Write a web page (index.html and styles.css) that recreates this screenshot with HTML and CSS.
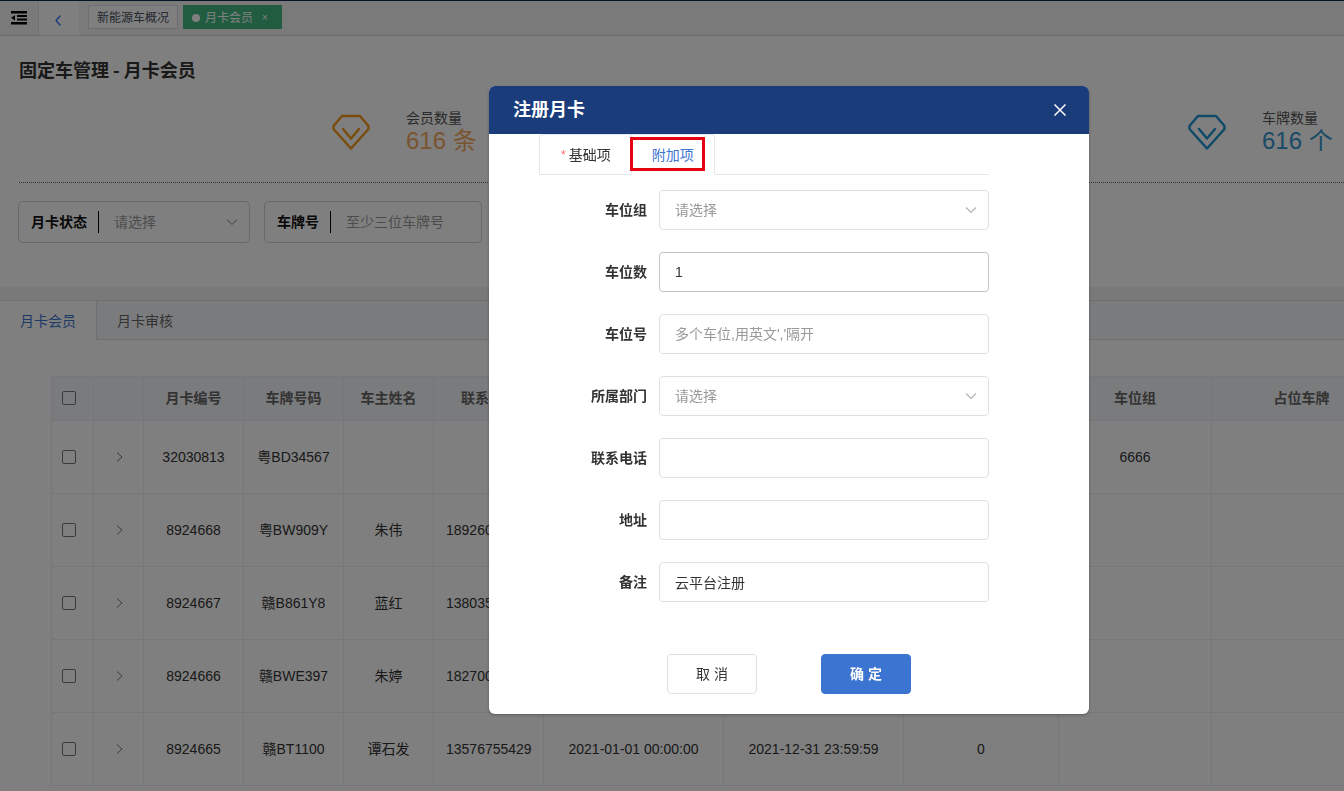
FILE: index.html
```html
<!DOCTYPE html>
<html lang="zh-CN">
<head>
<meta charset="utf-8">
<title>月卡会员</title>
<link rel="stylesheet" href="styles.css">
</head>
<body>
<div class="page">
  <header class="topbar">
    <button class="fold" type="button" aria-label="收起菜单">
      <svg width="16" height="14" viewBox="0 0 16 14"><path d="M0 0h16v2.500H0zM6 4h10v2H6zM6 7.500h10v2H6zM0 11h16v2.500H0zM0 6.800l4-2.600v5.200z" fill="#000"/></svg>
    </button>
    <button class="back" type="button" aria-label="返回">
      <svg width="6" height="11" viewBox="0 0 6 11"><path d="M5.500.5L1 5.500l4.500 5" fill="none" stroke="#2f6bff" stroke-width="1.300"/></svg>
    </button>
    <nav class="tags">
      <a class="tag" href="#">新能源车概况</a>
      <a class="tag tag-active" href="#"><span class="dot"></span>月卡会员<span class="tag-close">×</span></a>
    </nav>
  </header>
  <section class="summary">
    <h1 class="title">固定车管理 - 月卡会员</h1>
    <div class="stats">
      <div class="stat orange">
        <svg class="gem" width="40" height="38" viewBox="0 0 40 38" fill="none" stroke="currentColor" stroke-width="2.500" stroke-linejoin="round" stroke-linecap="round"><path d="M11 3h18l8.500 10v3L20 35.500 2.500 16v-3z"/><path d="M12 16l8 9.500 8-9.500"/></svg>
        <div class="stat-text"><span class="stat-label">会员数量</span><span class="stat-value">616 条</span></div>
      </div>
      <div class="stat blue">
        <svg class="gem" width="40" height="38" viewBox="0 0 40 38" fill="none" stroke="currentColor" stroke-width="2.500" stroke-linejoin="round" stroke-linecap="round"><path d="M11 3h18l8.500 10v3L20 35.500 2.500 16v-3z"/><path d="M12 16l8 9.500 8-9.500"/></svg>
        <div class="stat-text"><span class="stat-label">车牌数量</span><span class="stat-value">616 个</span></div>
      </div>
    </div>
    <div class="filters">
      <div class="filter filter-state">
        <label for="state">月卡状态</label>
        <select id="state" class="filter-input select"><option>请选择</option></select>
      </div>
      <div class="filter filter-plate">
        <label for="plate">车牌号</label>
        <input id="plate" class="filter-input" type="text" placeholder="至少三位车牌号">
      </div>
    </div>
  </section>
  <section class="list">
    <nav class="list-tabs">
      <a class="list-tab list-tab-active" href="#">月卡会员</a>
      <a class="list-tab" href="#">月卡审核</a>
    </nav>
    <div class="table-wrap">
      <table class="table">
        <colgroup><col class="w-check"><col class="w-expand"><col class="w-100"><col class="w-100"><col class="w-90"><col class="w-110"><col class="w-180"><col class="w-180"><col class="w-155"><col class="w-153"><col class="w-180"></colgroup>
        <thead>
          <tr><th class="check"><input type="checkbox" aria-label="全选"></th><th></th><th>月卡编号</th><th>车牌号码</th><th>车主姓名</th><th class="phone-head">联系</th><th></th><th></th><th></th><th>车位组</th><th>占位车牌</th></tr>
        </thead>
        <tbody>
          <tr><td class="check"><input type="checkbox" aria-label="32030813"></td><td><button class="expand" type="button" aria-label="展开"><svg width="7" height="10" viewBox="0 0 7 10"><path d="M1 .5L6 5 1 9.500" fill="none" stroke="currentColor"/></svg></button></td><td>32030813</td><td>粤BD34567</td><td></td><td></td><td></td><td></td><td></td><td>6666</td><td></td></tr>
          <tr><td class="check"><input type="checkbox" aria-label="8924668"></td><td><button class="expand" type="button" aria-label="展开"><svg width="7" height="10" viewBox="0 0 7 10"><path d="M1 .5L6 5 1 9.500" fill="none" stroke="currentColor"/></svg></button></td><td>8924668</td><td>粤BW909Y</td><td>朱伟</td><td class="phone">189260</td><td></td><td></td><td></td><td></td><td></td></tr>
          <tr><td class="check"><input type="checkbox" aria-label="8924667"></td><td><button class="expand" type="button" aria-label="展开"><svg width="7" height="10" viewBox="0 0 7 10"><path d="M1 .5L6 5 1 9.500" fill="none" stroke="currentColor"/></svg></button></td><td>8924667</td><td>赣B861Y8</td><td>蓝红</td><td class="phone">138035</td><td></td><td></td><td></td><td></td><td></td></tr>
          <tr><td class="check"><input type="checkbox" aria-label="8924666"></td><td><button class="expand" type="button" aria-label="展开"><svg width="7" height="10" viewBox="0 0 7 10"><path d="M1 .5L6 5 1 9.500" fill="none" stroke="currentColor"/></svg></button></td><td>8924666</td><td>赣BWE397</td><td>朱婷</td><td class="phone">182700</td><td></td><td></td><td></td><td></td><td></td></tr>
          <tr><td class="check"><input type="checkbox" aria-label="8924665"></td><td><button class="expand" type="button" aria-label="展开"><svg width="7" height="10" viewBox="0 0 7 10"><path d="M1 .5L6 5 1 9.500" fill="none" stroke="currentColor"/></svg></button></td><td>8924665</td><td>赣BT1100</td><td>谭石发</td><td class="phone">13576755429</td><td>2021-01-01 00:00:00</td><td>2021-12-31 23:59:59</td><td>0</td><td></td><td></td></tr>
        </tbody>
      </table>
    </div>
  </section>
</div>
<div class="overlay">
  <form class="dialog" role="dialog" aria-labelledby="dialog-title">
    <header class="dialog-head">
      <h2 id="dialog-title">注册月卡</h2>
      <button class="close" type="button" aria-label="关闭"><svg width="12" height="12" viewBox="0 0 12 12"><path d="M.5.5l11 11M11.500.5l-11 11" stroke="#fff" stroke-width="1.500"/></svg></button>
    </header>
    <div class="dialog-body">
      <nav class="tabs">
        <a class="tab" href="#"><span class="star">*</span>基础项</a>
        <a class="tab tab-on" href="#">附加项</a>
      </nav>
      <div class="fields">
        <div class="field"><label for="f1">车位组</label><select id="f1" class="input select"><option>请选择</option></select></div>
        <div class="field"><label for="f2">车位数</label><input id="f2" class="input hover" type="text" value="1"></div>
        <div class="field"><label for="f3">车位号</label><input id="f3" class="input" type="text" placeholder="多个车位,用英文','隔开"></div>
        <div class="field"><label for="f4">所属部门</label><select id="f4" class="input select"><option>请选择</option></select></div>
        <div class="field"><label for="f5">联系电话</label><input id="f5" class="input" type="text"></div>
        <div class="field"><label for="f6">地址</label><input id="f6" class="input" type="text"></div>
        <div class="field"><label for="f7">备注</label><input id="f7" class="input" type="text" value="云平台注册"></div>
      </div>
    </div>
    <footer class="actions">
      <button class="btn" type="button">取 消</button>
      <button class="btn btn-primary" type="button">确 定</button>
    </footer>
  </form>
</div>
</body>
</html>
```

FILE: styles.css
```css
* { box-sizing: border-box; }
body {
  margin: 0;
  height: 100vh;
  overflow: hidden;
  background: #fff;
  color: #333;
  font: 14px/20px "Liberation Sans", "Noto Sans CJK SC", sans-serif;
}
a { color: inherit; text-decoration: none; }
button, input, select { font: inherit; color: inherit; }
button { padding: 0; border: 0; background: none; }
h1, h2 { margin: 0; }

.topbar {
  display: flex;
  align-items: stretch;
  height: 36px;
  border-top: 1px solid #0c2450;
  border-bottom: 1px solid #d8dce5;
  background: #f5f5f5;
}
.fold { width: 38px; display: flex; align-items: center; justify-content: center; }
.back { width: 41px; padding: 5px 2px 0 0; background: #fff; border-left: 1px solid #e4e4e4; }
.tags { display: flex; align-items: flex-start; gap: 5px; padding: 4px 0 0 9px; }
.tag {
  display: flex;
  align-items: center;
  height: 24px;
  padding: 2px 8px 0;
  border: 1px solid #d8dce5;
  background: #fff;
  color: #495060;
  font-size: 12px;
}
.tag-active { border-color: #42b983; background: #42b983; color: #fff; }
.dot { width: 8px; height: 8px; margin-right: 5px; border-radius: 50%; background: #fff; }
.tag-close { width: 16px; margin-left: 4px; font-size: 10px; text-align: center; }

.summary { height: 251px; padding: 21px 0 0 18px; }
.title { padding-left: 1px; font-family: "Noto Sans CJK SC", sans-serif; font-size: 18px; line-height: 24px; }
.stats {
  display: grid;
  grid-template-columns: 856px 1fr;
  height: 102px;
  margin-left: 1px;
  padding: 26px 0 0 312px;
  border-bottom: 1px dotted #666;
}
.stat { display: flex; gap: 35px; }
.gem { margin-top: 6px; }
.orange { color: #f59a1e; }
.blue { color: #1e96d2; }
.stat-text { display: flex; flex-direction: column; white-space: nowrap; }
.stat-label { color: #555; line-height: 22px; }
.stat-value { font-size: 24px; line-height: 24px; }
.orange .stat-value { color: #f5a85f; }
.blue .stat-value { color: #3294cd; }
.filters { display: flex; gap: 14px; margin-top: 18px; }
.filter {
  display: flex;
  align-items: center;
  height: 42px;
  padding-left: 12px;
  border: 1px solid #d0d0d0;
  border-radius: 5px;
}
.filter label { padding-right: 11px; border-right: 1px solid #000; color: #111; font-weight: 700; line-height: 22px; }
.filter-state { width: 232px; }
.filter-plate { width: 218px; }
.filter-input { flex: 1; min-width: 0; height: 38px; padding: 0 15px; border: 0; background-color: transparent; color: #999; outline: 0; }
::placeholder { color: #999; opacity: 1; }
.select {
  appearance: none;
  color: #999;
  background-image: url("data:image/svg+xml,%3Csvg xmlns='http://www.w3.org/2000/svg' width='12' height='7'%3E%3Cpath d='M1 .5l5 5 5-5' fill='none' stroke='%23b4b4b8' stroke-width='1.2'/%3E%3C/svg%3E");
  background-repeat: no-repeat;
  background-position: right 11px center;
}

.list { border-top: 13px solid #f2f2f2; }
.list-tabs { display: flex; height: 40px; border: solid #dcdfe6; border-width: 1px 0; background: #f5f7fa; }
.list-tab { padding: 10px 20px; color: #666; }
.list-tab-active { height: 39px; border-right: 1px solid #dcdfe6; background: #fff; color: #3c74d1; }
.table-wrap { padding: 36px 0 0 51px; overflow: hidden; }
.table { width: 1341px; border-collapse: collapse; table-layout: fixed; }
.w-check { width: 42px; }
.w-expand { width: 50px; }
.w-90 { width: 90px; }
.w-100 { width: 100px; }
.w-110 { width: 110px; }
.w-153 { width: 153px; }
.w-155 { width: 155px; }
.w-180 { width: 180px; }
.table th, .table td { padding: 0; border: 1px solid #ebeef5; text-align: center; }
.table th { height: 44px; padding-bottom: 2px; background: #f5f7fa; color: #666; }
.table td { height: 73px; white-space: nowrap; overflow: hidden; }
.table .check { padding-right: 7px; }
.table .phone { padding-left: 12px; text-align: left; }
.table .phone-head { padding-left: 27px; text-align: left; }
.check input { appearance: none; display: block; width: 14px; height: 14px; margin: 0 auto; border: 1px solid #777; border-radius: 2px; }
.expand { padding-left: 2px; color: #777; }

.overlay {
  position: fixed;
  inset: 0;
  display: flex;
  justify-content: center;
  align-items: flex-start;
  padding: 86px 0 0 234px;
  background: rgba(0, 0, 0, .5);
}
.dialog { width: 600px; padding-bottom: 20px; border-radius: 6px; background: #fff; box-shadow: 0 1px 3px rgba(0, 0, 0, .3); overflow: hidden; }
.dialog-head { display: flex; align-items: center; justify-content: space-between; height: 48px; padding: 0 23px 0 24px; background: #1a3c7b; color: #fff; }
.dialog-head h2 { font-size: 18px; line-height: 24px; }
.close { display: flex; }
.dialog-body { padding: 0 100px 0 50px; }
.tabs { display: flex; height: 41px; border-bottom: 1px solid #e4e7ed; }
.tab { display: flex; align-items: center; height: 41px; padding: 0 20px 0 21px; border: 1px solid #e4e7ed; border-right: 0; border-top-left-radius: 4px; }
.tab-on {
  position: relative;
  width: 84px;
  padding: 0 20px;
  border: 1px solid #e4e7ed;
  border-bottom-color: #fff;
  border-radius: 0 4px 0 0;
  background: #fff;
  color: #3c74d1;
}
.tab-on::after { content: ""; position: absolute; inset: 2px 9px 3px -2px; border: 3px solid #e60012; }
.star { margin-right: 3px; color: #f56c6c; font-size: 12px; }
.fields { display: grid; gap: 22px; padding-top: 15px; }
.field { display: grid; grid-template-columns: 108px 1fr; column-gap: 12px; align-items: center; }
.field label { font-weight: 700; text-align: right; }
.input { width: 100%; height: 40px; padding: 0 15px; border: 1px solid #dcdfe6; border-radius: 4px; background-color: #fff; outline: 0; }
.input.select { color: #999; }
.hover { border-color: #c0c4cc; }
.actions { display: flex; justify-content: center; gap: 64px; padding-top: 52px; }
.btn { width: 90px; height: 40px; border: 1px solid #dcdfe6; border-radius: 4px; background: #fff; }
.btn-primary { border-color: #3c74d1; background: #3c74d1; color: #fff; font-weight: 700; }
```
